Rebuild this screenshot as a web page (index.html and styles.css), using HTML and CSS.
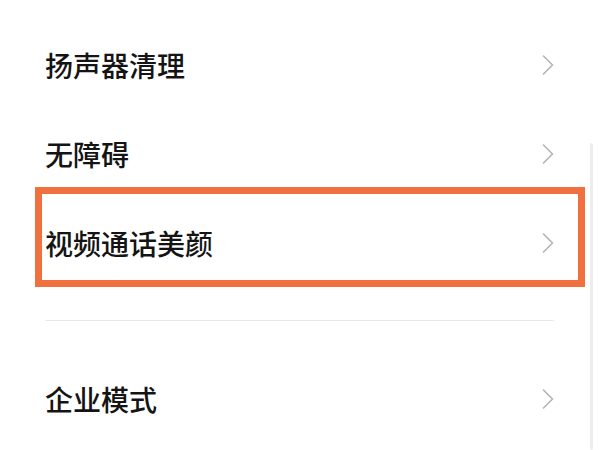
FILE: index.html
```html
<!DOCTYPE html>
<html lang="zh-CN">
<head>
<meta charset="utf-8">
<title>设置</title>
<link rel="stylesheet" href="styles.css">
</head>
<body>
<div class="page">
  <div class="group group-first">
    <div class="row">
      <span class="label">扬声器清理</span>
      <svg class="chev" viewBox="0 0 12 20" width="12" height="20"><path d="M1.5 1 L10.5 10 L1.5 19" /></svg>
    </div>
    <div class="row">
      <span class="label">无障碍</span>
      <svg class="chev" viewBox="0 0 12 20" width="12" height="20"><path d="M1.5 1 L10.5 10 L1.5 19" /></svg>
    </div>
    <div class="row">
      <span class="label">视频通话美颜</span>
      <svg class="chev" viewBox="0 0 12 20" width="12" height="20"><path d="M1.5 1 L10.5 10 L1.5 19" /></svg>
    </div>
  </div>
  <div class="divider"></div>
  <div class="group group-second">
    <div class="row">
      <span class="label">企业模式</span>
      <svg class="chev" viewBox="0 0 12 20" width="12" height="20"><path d="M1.5 1 L10.5 10 L1.5 19" /></svg>
    </div>
  </div>
  <div class="highlight"></div>
  <div class="scrollbar"></div>
</div>
</body>
</html>
```
FILE: styles.css
```css
html, body {
  margin: 0;
  padding: 0;
  background: #ffffff;
}
.page {
  position: relative;
  width: 600px;
  height: 450px;
  overflow: hidden;
  padding: 0 46px 0 45px;
  box-sizing: border-box;
  font-family: "Noto Sans CJK SC", "Noto Sans", sans-serif;
}
.group-first {
  padding-top: 20px;
}
.group-second {
  padding-top: 33px;
}
.row {
  height: 89px;
  display: flex;
  align-items: center;
  justify-content: space-between;
}
.label {
  font-size: 28px;
  font-weight: 500;
  color: #141414;
  line-height: 1;
}
.chev {
  display: block;
  fill: none;
  stroke: #b4b4b4;
  stroke-width: 1.6;
  stroke-linecap: round;
  stroke-linejoin: round;
}
.divider {
  margin-top: 33px;
  height: 1px;
  background: #e9e9e9;
}
.highlight {
  position: absolute;
  left: 35px;
  top: 187px;
  width: 550px;
  height: 100px;
  box-sizing: border-box;
  border: 7px solid #f0703f;
}
.scrollbar {
  position: absolute;
  left: 590px;
  top: 143px;
  width: 3px;
  height: 307px;
  border-radius: 2px;
  background: #ededed;
}
```
